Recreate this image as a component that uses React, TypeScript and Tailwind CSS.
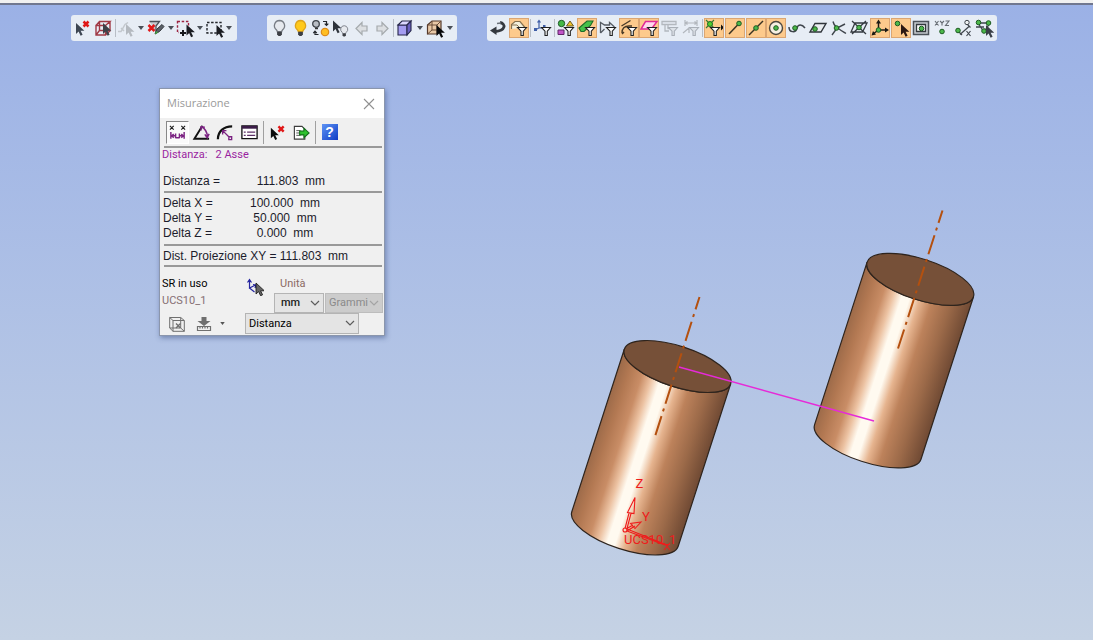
import React from "react";

const UI = "font-['Roboto','Liberation_Sans',sans-serif]";

/* ---------- shared glyph parts ---------- */

const Cursor = ({ x = 0, y = 0, fill = "#1b1d22", stroke = "none" }: { x?: number; y?: number; fill?: string; stroke?: string }) => (
  <path transform={`translate(${x} ${y})`} d="M0 0v11l2.6-2.4 2 4.2 2-1-2-4H8.4z" fill={fill} stroke={stroke} strokeWidth=".8" />
);
const RedX = ({ x = 0, y = 0, s = 5 }: { x?: number; y?: number; s?: number }) => (
  <path d={`M${x} ${y}l${s} ${s}M${x + s} ${y}l${-s} ${s}`} stroke="#e01818" strokeWidth="2.5" fill="none" />
);
const Dot = ({ x, y, r = 2.3 }: { x: number; y: number; r?: number }) => (
  <circle cx={x} cy={y} r={r} fill="#4cb84a" stroke="#1d5a22" strokeWidth="1" />
);
const Funnel = ({ x = 8, y = 9, dim = false }: { x?: number; y?: number; dim?: boolean }) => (
  <path
    transform={`translate(${x} ${y})`}
    d="M.5.5h9L6.3 4.2v4.3H4V4.2z"
    fill={dim ? "#dde2e8" : "#fff"}
    stroke={dim ? "#aab0b8" : "#202020"}
    strokeWidth="1.1"
  />
);
const Bulb = ({ x = 0, y = 0, k = 1, fill = "#e6e9ee", stroke = "#777c84" }: { x?: number; y?: number; k?: number; fill?: string; stroke?: string }) => (
  <g transform={`translate(${x} ${y}) scale(${k})`}>
    <path d="M6 1a5.2 5.2 0 0 0-3.2 9.2c.7.7 1 1.2 1 2h4.4c0-.8.3-1.3 1-2A5.2 5.2 0 0 0 6 1z" fill={fill} stroke={stroke} strokeWidth="1.3" />
    <path d="M3.6 12.2h4.8V15L7 16.5H5L3.6 15z" fill="#3c3f45" />
  </g>
);

/* ---------- toolbar icons, 20 x 20 ---------- */

const icons: Record<string, React.ReactNode> = {
  deselect: (<><Cursor x={3} y={5} fill="#3d4652" /><RedX x={10.5} y={3.5} /></>),
  boxSelect: (
    <>
      <path d="M3 7.5h9.500v9.500H3zM3 7.5 6.5 3.500H17l-4.5 4M17 3.500V13l-4.5 4M6.5 4v8.500H17M6.500 12.500 3 17" fill="none" stroke="#a03844" strokeWidth="1.4" />
      <Cursor x={10} y={5} fill="#3d4048" />
    </>
  ),
  ghost: (
    <>
      <path d="M1 13.500h3l4-7 3-2M4 10l3 3" fill="none" stroke="#c3c8cd" strokeWidth="1.5" />
      <Cursor x={9} y={6} fill="#b4b9bf" />
    </>
  ),
  filterClear: (
    <>
      <path d="M3.500 3.500h10L10 8v6" fill="#c7cbd0" stroke="#4c5057" strokeWidth="1.3" />
      <RedX x={2.500} y={7} s={6} />
      <path d="m9 16 2-5 5-4.500 2 2-4.500 5z" fill="#5b6168" stroke="#34383d" />
      <path d="m9 16.500 1-3.500 2 1.500z" fill="#3fae3f" />
    </>
  ),
  addRect: (
    <>
      <path d="M2.500 3.500h11v11h-11z" fill="none" stroke="#9c2440" strokeWidth="1.400" strokeDasharray="2.500 1.700" />
      <path d="M4 10h8v8H4z" fill="#e7edf5" />
      <Cursor x={11.500} y={6.500} />
      <path d="M8 12v6M5 15h6" stroke="#16181c" strokeWidth="2" />
    </>
  ),
  rect: (
    <>
      <path d="M2 4.500h14v10.500H2z" fill="none" stroke="#23262b" strokeWidth="1.400" strokeDasharray="2.500 1.600" />
      <Cursor x={11.500} y={7} />
    </>
  ),
  bulbOff: <Bulb x={3.500} y={1.500} />,
  bulbOn: <Bulb x={3.500} y={1.500} fill="#ffc91c" stroke="#dda31a" />,
  bulbSwap: (
    <>
      <circle cx="5" cy="6" r="3.300" fill="#b9bec5" stroke="#3e434a" strokeWidth="1.300" />
      <path d="M4 10.500h3" stroke="#333" strokeWidth="1.500" />
      <circle cx="14" cy="14" r="3.700" fill="#ffbe22" stroke="#dc8a1b" strokeWidth="1.200" />
      <path d="M12 3.500h3.500V7M13.700 5.700l1.800 1.800 1.800-1.800M7.500 16.500H4V14M2.300 15.200 4 13.200l1.800 2" fill="none" stroke="#23262b" strokeWidth="1.200" />
    </>
  ),
  bulbPick: (<><Cursor x={2} y={2.500} fill="#2f343c" /><Bulb x={9} y={7} k={0.7} /></>),
  left: <path d="M4 10.500l6-6v3.500h5v5h-5v3.500z" fill="#dcdfe2" stroke="#a5aaad" strokeWidth="1.200" />,
  right: <path d="M16 10.500l-6-6v3.500H5v5h5v3.500z" fill="#dcdfe2" stroke="#a5aaad" strokeWidth="1.200" />,
  cube: (
    <>
      <path d="M3 7h9v10H3z" fill="#a49cf0" stroke="#26264a" strokeWidth="1.100" />
      <path d="m3 7 4-4h9l-4 4z" fill="#dcd8ff" stroke="#26264a" strokeWidth="1.100" />
      <path d="m12 7 4-4v9.500L12 17z" fill="#6a60c0" stroke="#26264a" strokeWidth="1.100" />
    </>
  ),
  boxPick: (
    <>
      <path d="m2.500 7 4.500-4h9v9l-4 4H2.500z" fill="#e8c8a6" stroke="#54392a" strokeWidth="1.200" />
      <path d="M2.500 7H12v9M12 7l4-4M7 3v9h9M7 12l-4.500 4" fill="none" stroke="#6b4c38" strokeWidth="1" />
      <Cursor x={11.500} y={7} fill="#08090a" />
    </>
  ),
  back: (
    <>
      <path d="M12 4.500c6 1 6 8.500-5 9" fill="none" stroke="#34383e" strokeWidth="2.800" />
      <path d="M9 5.500 13 5" stroke="#6a7078" strokeWidth="1.500" />
      <path d="m2 12.500 6.500-4v8.500z" fill="#34383e" />
    </>
  ),
  fFace: (
    <>
      <path d="M2.500 11V6.500L6 3.500h5l5 6" fill="#f3f0dc" stroke="#86714e" strokeWidth="1.200" />
      <path d="M3 7h5l3 3" fill="none" stroke="#86714e" />
      <Funnel />
    </>
  ),
  fAxis: (
    <>
      <path d="M6 3v7l-4 2M6 10h6M4.500 4.500 6 2.500l1.500 2" fill="none" stroke="#3f5fa8" strokeWidth="1.200" />
      <path d="M1 10h3v3H1zM10 7h2.500v2.500H10z" fill="#3f5fa8" />
      <Funnel />
    </>
  ),
  fBody: (
    <>
      <circle cx="5.500" cy="5.500" r="3.200" fill="#43b846" stroke="#20592a" />
      <path d="m10.500 8 3.500-5 3.500 5z" fill="#f2c62b" stroke="#6b5a20" />
      <path d="M2 12h6v4.500H2z" fill="#c254c8" stroke="#5f2768" />
      <Funnel />
    </>
  ),
  fGreen: (
    <>
      <path d="m2 10 8-7h6l-2.500 4.500L7 13.500H4z" fill="#45c14a" stroke="#1d6b28" strokeWidth="1.100" />
      <Funnel />
    </>
  ),
  fWire: (
    <>
      <path d="M2.500 15V4.500l4 2.500h5V4.500l5 4.500M2.500 15l4-4" fill="none" stroke="#555b63" strokeWidth="1.300" />
      <Funnel />
    </>
  ),
  fCurve: (
    <>
      <path d="m2.500 8 9-5.500M3 15c0-5 3-7 7-7h3M5 14l-2 2" fill="none" stroke="#4a3b27" strokeWidth="1.400" />
      <Funnel />
    </>
  ),
  fPlane: (
    <>
      <path d="M6.500 3.500H18L12.500 11H2z" fill="#ffd8ec" stroke="#e02a96" strokeWidth="1.500" />
      <Funnel />
    </>
  ),
  fDimA: (
    <>
      <path d="M2 3.500h14v3H2zM5 6.500v6.500h4M8 6.500v4h5" fill="none" stroke="#b3b8be" strokeWidth="1.300" />
      <Funnel dim />
    </>
  ),
  fDimB: (
    <>
      <path d="M4 2v6M16 2v6M4 5h12M6.500 3.500 4.500 5l2 1.500M13.500 3.500l2 1.500-2 1.500M2 15l6-5v5" fill="none" stroke="#b3b8be" strokeWidth="1.200" />
      <Funnel dim />
    </>
  ),
  fSnap: (
    <>
      <path d="M2 2l8 8M10 2 2 10" stroke="#3a7d2c" strokeWidth="1.100" />
      <circle cx="6" cy="6" r="2.500" fill="#52d12f" stroke="#1d6b28" />
      <Funnel x={6} />
      <path d="M17 6.500v6l3-3z" fill="#111" />
    </>
  ),
  sEnd: (<><path d="M4 16 14 5.500" stroke="#3b3323" strokeWidth="1.500" /><Dot x={14} y={5.500} /></>),
  sMid: (<><path d="M3 17 17 3" stroke="#3b3323" strokeWidth="1.400" /><Dot x={10} y={10} /></>),
  sCenter: (<><circle cx="10" cy="10" r="6.500" fill="#f6efe2" stroke="#4c473f" strokeWidth="1.400" /><Dot x={10} y={10} /></>),
  sTan: (<><path d="M2 9c0 6 7 6 8 1 1-4 5-4 8 0" fill="none" stroke="#3f454c" strokeWidth="1.500" /><Dot x={8} y={10} /></>),
  sFace: (<><path d="M7 5.500h11L13 14H2z" fill="#e9edf0" stroke="#30353b" strokeWidth="1.400" /><Dot x={7} y={11} /></>),
  sCross: (<><path d="M4 3.500c1 5 5 7 13 12M16 6 8 10l-5 7" fill="none" stroke="#3f454c" strokeWidth="1.400" /><Dot x={7.500} y={10} /></>),
  sPierce: (<><path d="M6 5h12l-4.500 9H2zM3 3l14 13M17 3 3 16" fill="none" stroke="#353a40" strokeWidth="1.300" /><Dot x={10} y={9.500} /></>),
  sUcs: (
    <>
      <path d="M8.500 12V4M8.500 12H17M8.500 12 3 16" stroke="#1d1a14" strokeWidth="1.500" />
      <path d="M8.500 1.500 6 5.500h5zM19 12l-4-2.500v5zM1.500 17.500 6 16.500l-3-3.500z" fill="#1d1a14" />
      <Dot x={8.500} y={12} />
    </>
  ),
  sPick: (<><Dot x={6.500} y={5.500} /><Cursor x={10} y={6} fill="#2b1712" /></>),
  sScreen: (
    <>
      <path d="M2.500 3.500h15v13h-15z" fill="#c5cacf" stroke="#4b5158" strokeWidth="1.500" />
      <path d="M5.500 6.500h9v7h-9z" fill="#fff" stroke="#32373c" strokeWidth="1.300" />
      <Dot x={10.500} y={10.500} />
    </>
  ),
  sXyz: (
    <>
      <path d="m3 3 3.500 4.500M6.500 3 3 7.500M8 3l2 2 2-2M10 5v2.500M13.500 3H17l-3.500 4.500H17" fill="none" stroke="#656b72" strokeWidth="1.100" />
      <Dot x={10} y={13.500} />
    </>
  ),
  sDist: (
    <>
      <circle cx="14" cy="4.500" r="2.200" fill="#eef1f3" stroke="#3f454c" />
      <path d="m7 16.500 9-8M6 14l3 3M14.500 6.500l3 3M13.500 13l4 5M17.500 13l-4 5" fill="none" stroke="#3f454c" strokeWidth="1.200" />
      <Dot x={5} y={12.500} />
    </>
  ),
  sMulti: (
    <>
      <path d="M4 5h12M4 5l6 9 6-9M2 9h8" fill="none" stroke="#3f454c" strokeWidth="1.300" />
      <Dot x={4.500} y={4.500} /><Dot x={14.500} y={5} /><Dot x={10} y={13} />
      <Cursor x={12} y={7} fill="#3a3f46" />
    </>
  ),
};

type Item = { id: string; label: string; on?: boolean; menu?: boolean } | "|";

const Tool = ({ id, label, on }: { id: string; label: string; on?: boolean }) => (
  <button type="button" aria-label={label} aria-pressed={on} className="flex h-5 min-w-0 flex-1 items-center justify-center">
    <span className={on ? "h-5 w-5 shrink-0 bg-[#fdca8c] outline outline-1 -outline-offset-1 outline-[#dba673]" : "h-5 w-5 shrink-0"}>
      <svg viewBox="0 0 20 20" className="h-5 w-5">{icons[id]}</svg>
    </span>
  </button>
);

const Toolbar = ({ items, label, className }: { items: Item[]; label: string; className: string }) => (
  <div role="toolbar" aria-label={label} className={`flex h-[26px] shrink-0 items-center rounded-[3px] bg-[#e7edf5] ${className}`}>
    {items.map((it, i) =>
      it === "|" ? (
        <span key={i} className="mx-px h-[18px] w-px bg-[#b8bec6]" />
      ) : (
        <React.Fragment key={i}>
          <Tool id={it.id} label={it.label} on={it.on} />
          {it.menu && (
            <button type="button" aria-label={`${it.label}: opzioni`} className="flex h-5 w-[9px] items-center justify-center">
              <svg viewBox="0 0 6 4" className="h-1 w-1.5"><path d="M0 0h6L3 4z" fill="#4a4f57" /></svg>
            </button>
          )}
        </React.Fragment>
      )
    )}
  </div>
);

const selection: Item[] = [
  { id: "deselect", label: "Deseleziona" },
  { id: "boxSelect", label: "Seleziona solido" },
  "|",
  { id: "ghost", label: "Selezione precedente", menu: true },
  { id: "filterClear", label: "Azzera filtri", menu: true },
  { id: "addRect", label: "Aggiungi con finestra", menu: true },
  { id: "rect", label: "Finestra", menu: true },
];
const visibility: Item[] = [
  { id: "bulbOff", label: "Nascondi" },
  { id: "bulbOn", label: "Mostra" },
  { id: "bulbSwap", label: "Inverti visibilità" },
  { id: "bulbPick", label: "Mostra selezione" },
  { id: "left", label: "Indietro" },
  { id: "right", label: "Avanti" },
  "|",
  { id: "cube", label: "Ombreggiatura", menu: true },
  { id: "boxPick", label: "Vista", menu: true },
];
const snaps: Item[] = [
  { id: "back", label: "Ripristina" },
  { id: "fFace", label: "Filtro facce", on: true },
  "|",
  { id: "fAxis", label: "Filtro assi" },
  "|",
  { id: "fBody", label: "Filtro corpi" },
  { id: "fGreen", label: "Filtro superfici", on: true },
  { id: "fWire", label: "Filtro profili" },
  { id: "fCurve", label: "Filtro curve", on: true },
  { id: "fPlane", label: "Filtro piani", on: true },
  { id: "fDimA", label: "Filtro annotazioni" },
  { id: "fDimB", label: "Filtro quote" },
  "|",
  { id: "fSnap", label: "Filtro punti", on: true },
  { id: "sEnd", label: "Estremo", on: true },
  { id: "sMid", label: "Punto medio", on: true },
  { id: "sCenter", label: "Centro", on: true },
  { id: "sTan", label: "Su curva" },
  { id: "sFace", label: "Su faccia" },
  { id: "sCross", label: "Intersezione" },
  { id: "sPierce", label: "Perforazione" },
  { id: "sUcs", label: "Origine", on: true },
  { id: "sPick", label: "Punto libero", on: true },
  { id: "sScreen", label: "Piano schermo" },
  { id: "sXyz", label: "Coordinate" },
  { id: "sDist", label: "Distanza relativa" },
  { id: "sMulti", label: "Punti multipli" },
];

/* ---------- 3D scene ---------- */

const Cylinder = () => (
  <g stroke="#2e241d" strokeWidth="1.200">
    <path d="M-53.200-17.300-105.700 145.200A55.900 20.400 18 0 0 .7 179.800L53.200 17.300A55.900 20.400 18 0 1-53.200-17.300z" fill="url(#copper)" />
    <ellipse rx="55.900" ry="20.400" transform="rotate(18)" fill="#765038" />
  </g>
);

const axis = { stroke: "#b4500f", strokeWidth: 2, strokeDasharray: "20 5 3 5", strokeDashoffset: 7 };

const Scene = () => (
  <svg viewBox="0 5 1093 635" preserveAspectRatio="xMidYMid slice" className="absolute inset-0 h-full w-full" role="img" aria-label="Modello 3D">
    <defs>
      <linearGradient id="copper" gradientUnits="userSpaceOnUse" x1="-53.200" y1="-17.300" x2="53.200" y2="17.300">
        <stop offset="0" stopColor="#9c6a49" />
        <stop offset=".1" stopColor="#b27852" />
        <stop offset=".22" stopColor="#c98d66" />
        <stop offset=".31" stopColor="#ecc2a2" />
        <stop offset=".39" stopColor="#fffaf0" />
        <stop offset=".46" stopColor="#fffaf0" />
        <stop offset=".55" stopColor="#e6b48f" />
        <stop offset=".66" stopColor="#bd825b" />
        <stop offset=".82" stopColor="#9c6a49" />
        <stop offset="1" stopColor="#704a34" />
      </linearGradient>
    </defs>
    <g transform="translate(677.500 366.500)"><Cylinder /></g>
    <g transform="translate(920.300 279.400)"><Cylinder /></g>
    <path d="M699.500 297 655 436.500" fill="none" {...axis} />
    <path d="M942.500 210.500 898 348.500" fill="none" {...axis} />
    <path d="M679 367 874 421" stroke="#e62ad8" strokeWidth="1.300" />
    <g fill="none" stroke="#ee1c1c" strokeWidth="1.100">
      <circle cx="625" cy="530" r="2" />
      <path d="M625 528.500 629 513M627 528.500l4-15M635 497.500l-7.500 15 6.500 1zM626 529l7-4M627 531l8-5M641 522l-10.500 1.500 4.500 5zM627 531l38 14M627 529l20 8 20 8M664 543l6 7M670 543l-6 7" />
    </g>
    <g fill="#ee1c1c" fontFamily="'Roboto', sans-serif">
      <text x="635.500" y="487.500" fontSize="13">Z</text>
      <text x="642" y="521" fontSize="13">Y</text>
      <text x="624" y="544" fontSize="13">UCS10_1</text>
    </g>
  </svg>
);

/* ---------- measurement dialog ---------- */

const dialogTools: { label: string; on?: boolean; sepAfter?: boolean; art: React.ReactNode }[] = [
  {
    label: "Distanza",
    on: true,
    art: (
      <>
        <path d="m2 3 4 4M6 3 2 7M14 3l4 4M18 3l-4 4" stroke="#1e1e1e" strokeWidth="1.200" />
        <path d="M3 9.500V16.500M17 9.500V16.500M3 13.500h4.500M17 13.500h-4.500M6 11.500 4 13.500 6 15.500M14 11.500l2 2-2 2M8 11v5M12 11v5M8 15.500h4" fill="none" stroke="#7b2382" strokeWidth="1.500" />
      </>
    ),
  },
  {
    label: "Angolo",
    art: (
      <>
        <path d="M11 3 2.500 16.500H18" fill="none" stroke="#111" strokeWidth="2" />
        <path d="M10 4c4 2 6 6 6.500 11M9.500 8V4l4 .5M13.500 12l2.500 3.500 2-4" fill="none" stroke="#7b2382" strokeWidth="1.600" />
      </>
    ),
  },
  {
    label: "Raggio",
    art: (
      <>
        <path d="M2 17C2 9 8 3.500 17 3.500" fill="none" stroke="#111" strokeWidth="2.400" />
        <path d="m7 8 7 7M7 12V8h4M13.500 14.500h3v3h-3z" fill="none" stroke="#7b2382" strokeWidth="1.400" />
      </>
    ),
  },
  {
    label: "Proprietà",
    sepAfter: true,
    art: (
      <>
        <path d="M2 3h16v13.500H2z" fill="#fff" stroke="#111" strokeWidth="1.400" />
        <path d="M2 3h16v3H2z" fill="#3b1c48" />
        <path d="M7.500 9.500H16M7.500 13H16M4 9.500h2M4 13h2" stroke="#5e3268" strokeWidth="1.300" />
      </>
    ),
  },
  { label: "Azzera", art: (<><Cursor x={3} y={5} fill="#0c0c0c" /><RedX x={11} y={3.500} s={5.500} /></>) },
  {
    label: "Esporta",
    sepAfter: true,
    art: (
      <>
        <path d="M2.500 3.500h8l3 3v10.500h-11z" fill="#fff" stroke="#3d3d3d" strokeWidth="1.200" />
        <path d="M4.500 8H9M4.500 10.500H8M4.500 13H9" stroke="#555" />
        <path d="M8 8.500h4.500V5.500L18 10.500 12.500 15.500v-3H8z" fill="#2fc22f" stroke="#146d1c" strokeWidth="1.100" />
      </>
    ),
  },
];

const Chevron = ({ color = "#5c5c5c" }: { color?: string }) => (
  <svg viewBox="0 0 10 6" className="pointer-events-none absolute top-[7px] right-1 h-1.5 w-2.5">
    <path d="m1 1 4 4 4-4" fill="none" stroke={color} strokeWidth="1.200" />
  </svg>
);

const Rule = () => <div className="mr-0.5 ml-1 h-[2px] bg-[#999]" />;

const MeasureDialog = () => (
  <section role="dialog" aria-labelledby="dlg-title" className="absolute top-[83px] left-[159px] w-[226px] border border-[#8b96ac] bg-[#f0f0f0] pb-px shadow-[1px_2px_5px_rgba(40,60,110,0.45)]">
    <header className="flex h-[29px] items-center justify-between bg-white pr-[9px] pl-[7px]">
      <h1 id="dlg-title" className="font-['Open_Sans','Noto_Sans',sans-serif] text-[11px] text-[#9a9a9a]">Misurazione</h1>
      <button type="button" aria-label="Chiudi" className="h-3 w-3">
        <svg viewBox="0 0 12 12" className="h-3 w-3"><path d="m1 1 10 10M11 1 1 11" stroke="#909090" strokeWidth="1.100" /></svg>
      </button>
    </header>

    <div className="flex h-7 items-center gap-px pl-1.5">
      {dialogTools.map((t) => (
        <React.Fragment key={t.label}>
          <button
            type="button"
            aria-label={t.label}
            aria-pressed={t.on}
            className={`flex h-[23px] w-[23px] items-center justify-center border ${t.on ? "border-t-[#888] border-r-white border-b-white border-l-[#888] bg-[#fafafa]" : "border-transparent"}`}
          >
            <svg viewBox="0 0 20 20" className="h-[19px] w-[19px] shrink-0">{t.art}</svg>
          </button>
          {t.sepAfter && <span className="mx-px h-[23px] w-px bg-[#a0a0a0]" />}
        </React.Fragment>
      ))}
      <button type="button" aria-label="Guida" className="flex h-[23px] w-[23px] items-center justify-center">
        <span className="flex h-4 w-4 items-center justify-center bg-linear-to-br from-[#5f93f4] to-[#1238c4] font-['Liberation_Sans',sans-serif] text-[14px] leading-4 font-bold text-white">?</span>
      </button>
    </div>
    <Rule />

    <p className={`${UI} h-[15px] pl-0.5 text-[11px] leading-[14px] whitespace-pre text-[#9a1fa0]`}>Distanza:   2 Asse</p>

    <div className="font-['Liberation_Sans',sans-serif] text-[12px] leading-[15px] text-[#1c1c2c]">
      <div className="flex pt-[11px] pb-[2px] pl-[3px]">
        <span className="w-[88px]">Distanza =</span>
        <span className="w-20 text-center whitespace-pre">111.803  mm</span>
      </div>
      <Rule />
      <div className="pt-[3px] pb-[3px] pl-[3px]">
        {[["X", "100.000"], ["Y", "50.000"], ["Z", "0.000"]].map(([k, v]) => (
          <div key={k} className="flex">
            <span className="w-[82px]">Delta {k} =</span>
            <span className="w-20 text-center whitespace-pre">{v}{"  mm"}</span>
          </div>
        ))}
      </div>
      <Rule />
      <p className="pt-[3px] pb-px pl-[3px] whitespace-pre">Dist. Proiezione XY = 111.803  mm</p>
      <Rule />
    </div>

    <div className={`${UI} flex pt-[8px] pl-0.5 text-[11px]`}>
      <div className="w-[84px]">
        <p className="h-[17px] leading-[17px] text-black">SR in uso</p>
        <p className="h-[17px] leading-[17px] text-[#866f73]">UCS10_1</p>
      </div>
      <button type="button" aria-label="Scegli SR" className="mt-[3px] h-[18px] w-[18px]">
        <svg viewBox="0 0 18 18" className="h-[18px] w-[18px]">
          <path d="M3.500 2v8l6-3M3.500 10l5 4M1.500 4.500l2-3 2 3M7 6.500l3 .5-1 3" fill="none" stroke="#2626a0" strokeWidth="1.200" />
          <Cursor x={10} y={5} fill="#666" stroke="#111" />
        </svg>
      </button>
      <div className="ml-[10px]">
        <label htmlFor="unit" className="block h-[18px] pl-1.5 leading-[17px] text-[#8c6a64]">Unità</label>
        <div className="flex gap-px">
          <div className="relative w-[50px]">
            <select id="unit" defaultValue="mm" className="block h-5 w-full appearance-none border border-[#b4b4b4] bg-[#e4e4e4] pl-1.5 text-[11px] leading-[18px] font-medium text-[#222]">
              <option>mm</option><option>cm</option>
            </select>
            <Chevron />
          </div>
          <div className="relative w-[58px]">
            <select aria-label="Massa" disabled defaultValue="Grammi" className="block h-5 w-full appearance-none border border-[#bdbdbd] bg-[#cccccc] pl-[3px] text-[11px] leading-[18px] text-[#8a8a8a] opacity-100">
              <option>Grammi</option>
            </select>
            <Chevron color="#a4a4a4" />
          </div>
        </div>
      </div>
    </div>

    <div className={`${UI} flex h-[21px] items-center pl-[9px]`}>
      <button type="button" aria-label="Ingombro" className="h-4 w-4">
        <svg viewBox="0 0 16 16" className="h-4 w-4">
          <path d="M.7 1.500h11v10.500H.7zM4 4.500h11.300v10.800H4zM.7 1.500 4 4.500M11.700 1.500l3.600 3M.7 12 4 15.300M11.700 12l3.600 3.300" fill="none" stroke="#6f6f6f" />
          <path d="m7 7.500 4.500 4.500M11.500 7.500 7 12" stroke="#6f6f6f" strokeWidth="1.400" />
        </svg>
      </button>
      <button type="button" aria-label="Salva misura" className="ml-[11px] h-4 w-4">
        <svg viewBox="0 0 16 16" className="h-4 w-4">
          <path d="M5.500 1h5v4h4L8 10 1.500 5h4z" fill="#6f6f6f" />
          <path d="M1.500 10.500h13v4h-13zM4 10.500v2M6.500 10.500v2M9 10.500v2M11.500 10.500v2" fill="none" stroke="#6f6f6f" strokeWidth="1.200" />
        </svg>
      </button>
      <button type="button" aria-label="Opzioni salvataggio" className="ml-[6px] flex h-4 w-2 items-center justify-center">
        <svg viewBox="0 0 6 4" className="h-[3px] w-[5px]"><path d="M0 0h6L3 4z" fill="#555" /></svg>
      </button>
      <div className="relative ml-[19px] w-[114px]">
        <select aria-label="Tipo di misura" defaultValue="Distanza" className="block h-[21px] w-full appearance-none border border-[#b4b4b4] bg-[#e4e4e4] pl-[3px] text-[11px] leading-[19px] text-black">
          <option>Distanza</option><option>Angolo</option><option>Raggio</option>
        </select>
        <Chevron />
      </div>
    </div>
  </section>
);

export default function App() {
  return (
    <div className="flex min-h-screen flex-col">
      <div className="h-[5px] border-b-2 border-[#70778f] bg-[#f0f0f0]" />
      <main className="relative flex-1 overflow-hidden bg-linear-to-b from-[#9bb1e6] to-[#c5d2e4]">
        <Scene />
        <div className="relative flex gap-[30px] pt-[10px] pl-[71px]">
          <Toolbar label="Selezione" items={selection} className="w-[166px] pr-[3px] pl-[2px]" />
          <Toolbar label="Visibilità" items={visibility} className="w-[190px] pr-[3px] pl-[3px]" />
          <Toolbar label="Snap" items={snaps} className="w-[510px] pr-[3px] pl-px" />
        </div>
        <MeasureDialog />
      </main>
    </div>
  );
}
